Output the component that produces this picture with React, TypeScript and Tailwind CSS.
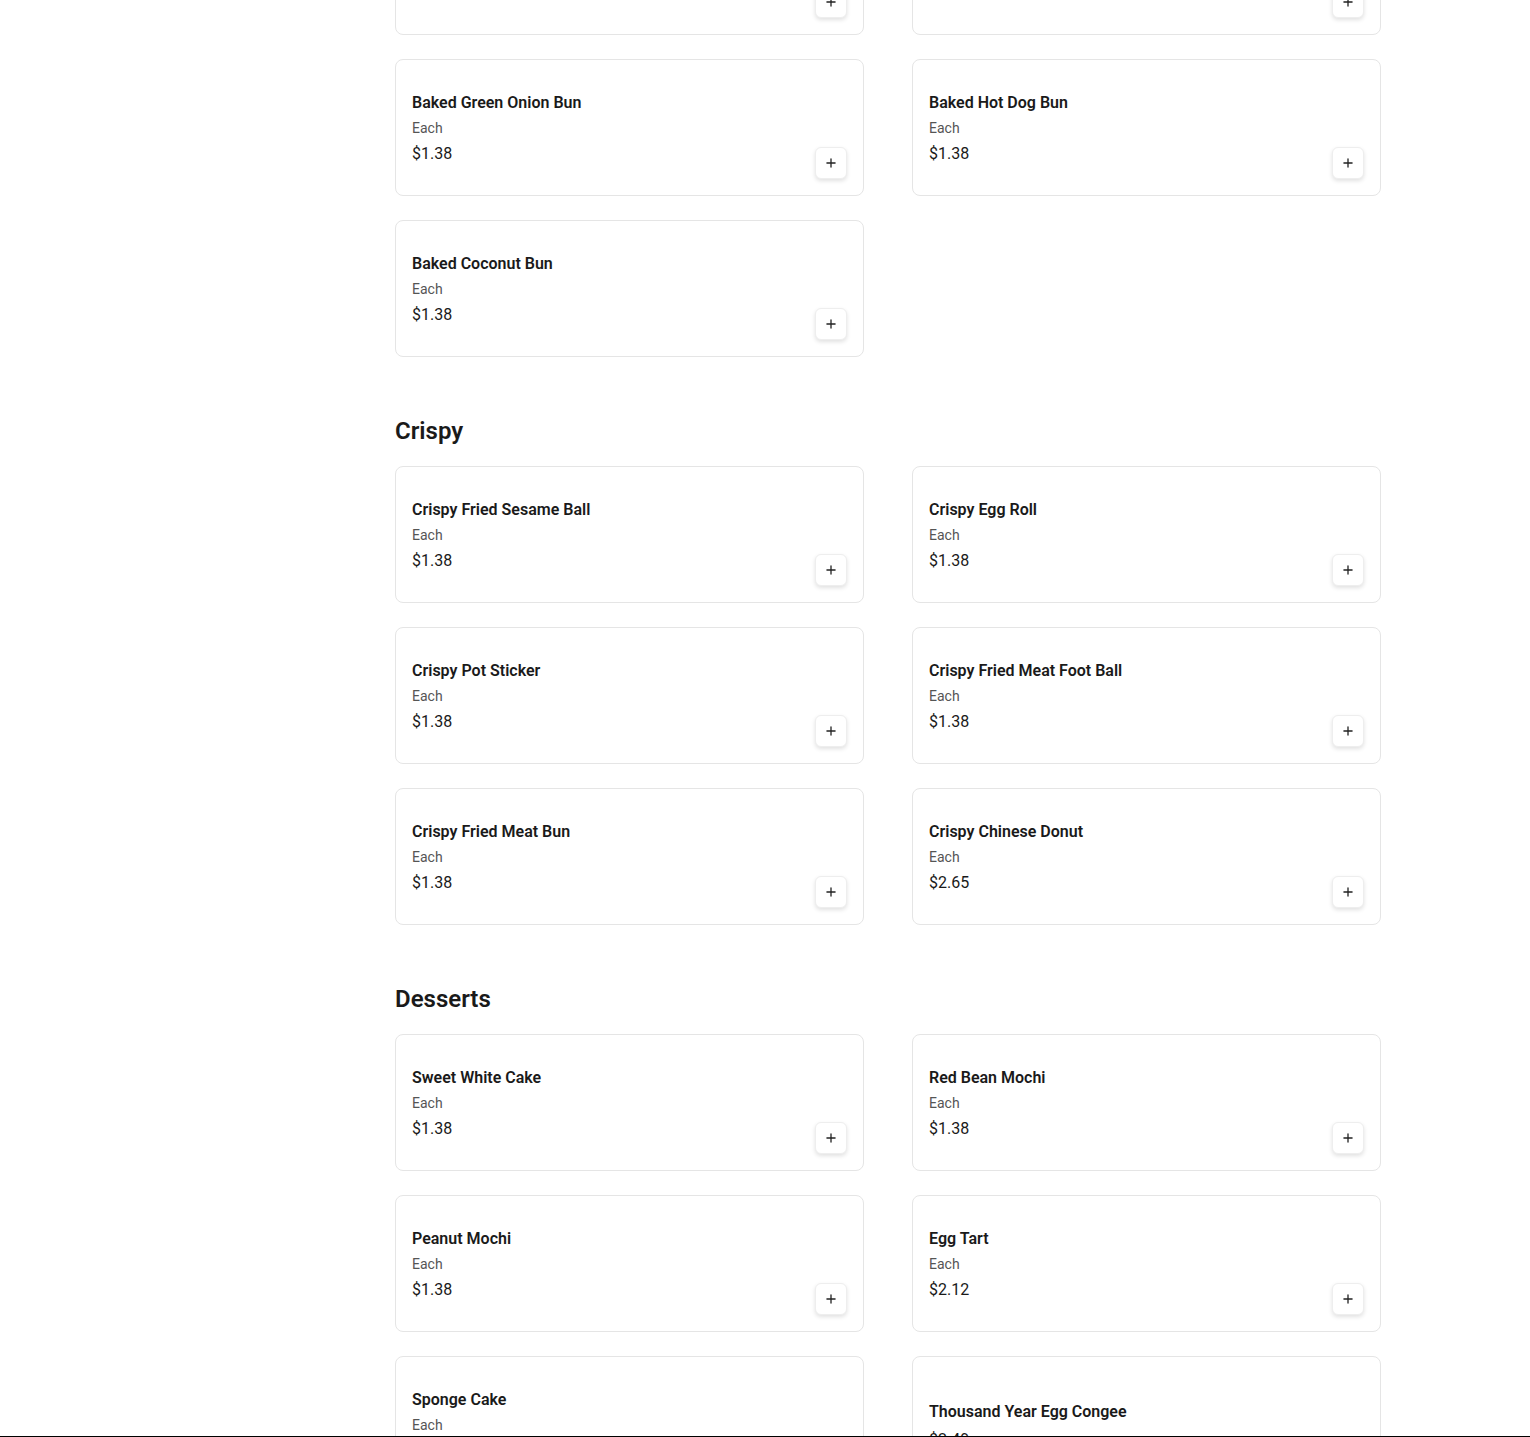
import { Plus } from "lucide-react";

type Item = { name: string; unit?: string; price: string };
type Section = { title?: string; items: Item[] };

const each = (name: string, price = "$1.38"): Item => ({ name, unit: "Each", price });

const sections: Section[] = [
  {
    items: [
      each("Baked BBQ Pork Bun"),
      each("Baked Custard Bun"),
      each("Baked Green Onion Bun"),
      each("Baked Hot Dog Bun"),
      each("Baked Coconut Bun"),
    ],
  },
  {
    title: "Crispy",
    items: [
      each("Crispy Fried Sesame Ball"),
      each("Crispy Egg Roll"),
      each("Crispy Pot Sticker"),
      each("Crispy Fried Meat Foot Ball"),
      each("Crispy Fried Meat Bun"),
      each("Crispy Chinese Donut", "$2.65"),
    ],
  },
  {
    title: "Desserts",
    items: [
      each("Sweet White Cake"),
      each("Red Bean Mochi"),
      each("Peanut Mochi"),
      each("Egg Tart", "$2.12"),
      each("Sponge Cake"),
      { name: "Thousand Year Egg Congee", price: "$2.49" },
    ],
  },
];

function ItemCard({ item }: { item: Item }) {
  return (
    <div className="relative flex h-[137px] items-center rounded-lg border border-[#e5e5e5] bg-white px-4">
      <div className="flex flex-col pt-[2px]">
        <div className="text-base leading-6 font-semibold text-[#1a1a1a]">{item.name}</div>
        {item.unit && <div className="mt-[3px] text-sm leading-5 text-[#555]">{item.unit}</div>}
        <div className="mt-1 text-base leading-6 text-[#1a1a1a]">{item.price}</div>
      </div>
      <button className="absolute right-4 bottom-4 flex h-8 w-8 items-center justify-center rounded-md border border-[#eee] bg-white shadow-[0_2px_4px_rgba(0,0,0,0.12)]">
        <Plus className="h-3.5 w-3.5 text-[#222]" strokeWidth={2.25} />
      </button>
    </div>
  );
}

export default function App() {
  return (
    <div className="min-h-screen overflow-hidden bg-white font-['Roboto','Liberation_Sans',sans-serif]">
      {/* page is scrolled: first row sits mostly above the fold */}
      <div className="mt-[-102px] ml-[395px] w-[986px] pb-10">
        {sections.map((s, i) => (
          <section key={i} className={i > 0 ? "mt-[58px]" : ""}>
            {s.title && (
              <h2 className="mb-[19px] text-2xl leading-8 font-semibold text-[#1a1a1a]">{s.title}</h2>
            )}
            <div className="grid grid-cols-2 gap-x-12 gap-y-6">
              {s.items.map((it) => (
                <ItemCard key={it.name} item={it} />
              ))}
            </div>
          </section>
        ))}
      </div>
      <div className="fixed right-0 bottom-0 left-0 h-px bg-black" />
    </div>
  );
}
